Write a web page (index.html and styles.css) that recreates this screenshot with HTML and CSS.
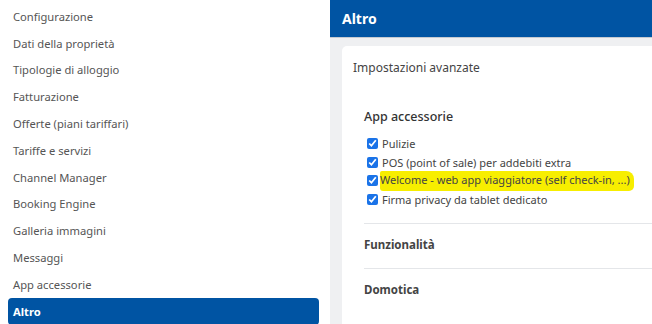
FILE: index.html
```html
<!DOCTYPE html>
<html lang="it">
<head>
    <meta charset="UTF-8">
    <title>Altro</title>
    <link rel="stylesheet" href="styles.css">
</head>
<body>
    <div class="sidebar">
        <div class="nav-item">Configurazione</div>
        <div class="nav-item">Dati della proprietà</div>
        <div class="nav-item">Tipologie di alloggio</div>
        <div class="nav-item">Fatturazione</div>
        <div class="nav-item">Offerte (piani tariffari)</div>
        <div class="nav-item">Tariffe e servizi</div>
        <div class="nav-item">Channel Manager</div>
        <div class="nav-item">Booking Engine</div>
        <div class="nav-item">Galleria immagini</div>
        <div class="nav-item">Messaggi</div>
        <div class="nav-item">App accessorie</div>
        <div class="nav-item active">Altro</div>
    </div>

    <div class="main">
        <div class="header">Altro</div>
        <div class="content">
            <div class="card">
                <div class="card-title">Impostazioni avanzate</div>
                <div class="section apps">
                    <h3>App accessorie</h3>
                    <label class="check"><input type="checkbox" checked> Pulizie</label>
                    <label class="check"><input type="checkbox" checked> POS (point of sale) per addebiti extra</label>
                    <label class="check"><input type="checkbox" checked> <span class="marker">Welcome - web app viaggiatore (self check-in, ...)</span></label>
                    <label class="check"><input type="checkbox" checked> Firma privacy da tablet dedicato</label>
                </div>
                <div class="section line">
                    <h4>Funzionalità</h4>
                </div>
                <div class="section line">
                    <h4>Domotica</h4>
                </div>
            </div>
        </div>
    </div>
</body>
</html>
```

FILE: styles.css
```css
body {
    font-family: "Noto Sans", "Open Sans", sans-serif;
    margin: 0;
    padding: 0;
    display: flex;
    height: 324px;
    overflow: hidden;
    background-color: #fff;
}
.sidebar {
    width: 330px;
    flex-shrink: 0;
    padding-top: 3px;
    box-sizing: border-box;
}
.nav-item {
    height: 26.8px;
    display: flex;
    align-items: center;
    margin: 0 11px 0 8px;
    padding-left: 5px;
    font-size: 11.2px;
    color: #555;
    border-radius: 4px;
}
.nav-item.active {
    background-color: #0054a3;
    color: #fff;
    font-weight: bold;
}
.main {
    flex: 1;
    min-width: 0;
    display: flex;
    flex-direction: column;
    background-color: #eff0f2;
}
.header {
    height: 37px;
    flex-shrink: 0;
    background-color: #0054a3;
    border-bottom: 1px solid #c6cad1;
    color: #fff;
    font-weight: bold;
    font-size: 14px;
    padding-left: 12px;
    display: flex;
    align-items: center;
}
.content {
    padding: 8px 0 0 12px;
    flex: 1;
}
.card {
    background: #fff;
    border-radius: 5px 0 0 0;
    height: 100%;
    padding: 13px 0 0 11px;
    box-sizing: border-box;
    white-space: nowrap;
}
.card-title {
    font-size: 12px;
    color: #444;
    line-height: 18px;
}
.section {
    margin-left: 11px;
}
.section h3 {
    font-size: 12.5px;
    font-weight: 500;
    color: #333;
    margin: 31px 0 8px 0;
    line-height: 18px;
}
.apps {
    padding-bottom: 14px;
}
.check {
    display: flex;
    align-items: center;
    height: 18.7px;
    font-size: 11px;
    color: #444;
    padding-left: 3px;
}
.check input {
    width: 11px;
    height: 11px;
    margin: 0 4px 0 0;
    accent-color: #1a73e8;
}
.marker {
    background-color: #f7ee00;
    padding: 1px 4px 4px 0;
    margin-left: -2px;
    border-radius: 2px 8px 5px 3px;
}
.section.line {
    border-top: 1px solid #e4e6e9;
}
.section h4 {
    font-size: 11.5px;
    font-weight: bold;
    color: #444;
    margin: 0;
    height: 44px;
    line-height: 42px;
}
```
